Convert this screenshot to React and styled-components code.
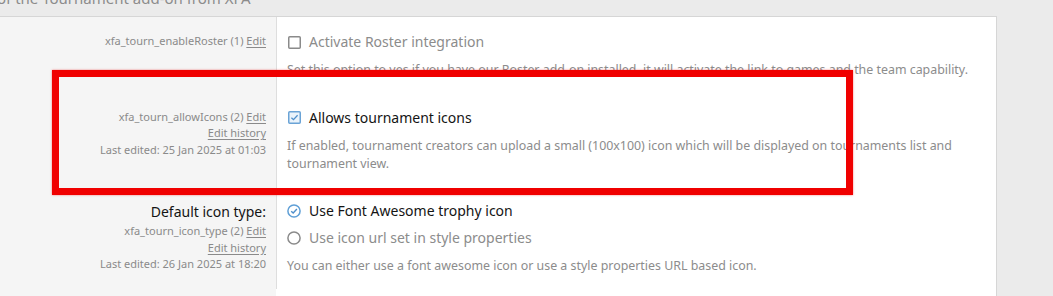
import React from "react";
import styled, { createGlobalStyle } from "styled-components";

const GlobalStyle = createGlobalStyle`
  html, body {
    margin: 0;
    padding: 0;
    background: #ebebeb;
    font-family: "Noto Sans", "Open Sans", sans-serif;
    color: #141414;
    overflow: hidden;
  }
`;

const options = [
  {
    id: "xfa_tourn_enableRoster",
    version: 1,
    history: false,
    choices: [{ type: "checkbox", label: "Activate Roster integration", checked: false }],
    explain:
      "Set this option to yes if you have our Roster add-on installed, it will activate the link to games and the team capability.",
  },
  {
    id: "xfa_tourn_allowIcons",
    version: 2,
    history: true,
    edited: "25 Jan 2025 at 01:03",
    choices: [{ type: "checkbox", label: "Allows tournament icons", checked: true }],
    explain:
      "If enabled, tournament creators can upload a small (100x100) icon which will be displayed on tournaments list and tournament view.",
  },
  {
    id: "xfa_tourn_icon_type",
    title: "Default icon type:",
    version: 2,
    history: true,
    edited: "26 Jan 2025 at 18:20",
    choices: [
      { type: "radio", label: "Use Font Awesome trophy icon", checked: true },
      { type: "radio", label: "Use icon url set in style properties", checked: false },
    ],
    explain: "You can either use a font awesome icon or use a style properties URL based icon.",
  },
];

function CheckBox({ checked }) {
  return (
    <svg width="13" height="13" viewBox="0 0 13 13">
      <rect
        x="0.75"
        y="0.75"
        width="11.5"
        height="11.5"
        rx="1"
        fill={checked ? "#eaf3fb" : "#fff"}
        stroke={checked ? "#6aa3d6" : "#8a8a8a"}
        strokeWidth="1.5"
      />
      {checked && (
        <path d="M3.4 6.7 L5.5 8.7 L9.6 4.3" fill="none" stroke="#4f8fcb" strokeWidth="1.3" />
      )}
    </svg>
  );
}

function Radio({ checked }) {
  return (
    <svg width="14" height="14" viewBox="0 0 14 14">
      <circle
        cx="7"
        cy="7"
        r="6.1"
        fill="#fff"
        stroke={checked ? "#5f9fd6" : "#8a8a8a"}
        strokeWidth="1.5"
      />
      {checked && (
        <path d="M4.2 7.2 L6.2 9.1 L9.9 5.1" fill="none" stroke="#4f8fcb" strokeWidth="1.4" />
      )}
    </svg>
  );
}

export default function App() {
  return (
    <Page>
      <GlobalStyle />
      <Header>
        <span>of the Tournament add-on from XFA</span>
      </Header>
      <Panel>
        {options.map((opt) => (
          <Row key={opt.id}>
            <Dt $titled={!!opt.title}>
              {opt.title && <Title>{opt.title}</Title>}
              <Hint>
                {opt.id} ({opt.version}) <u>Edit</u>
              </Hint>
              {opt.history && (
                <Hint>
                  <u>Edit history</u>
                </Hint>
              )}
              {opt.edited && <Hint>Last edited: {opt.edited}</Hint>}
            </Dt>
            <Dd>
              <Choices>
                {opt.choices.map((c) => (
                  <Choice key={c.label} $checked={c.checked}>
                    <IconBox>
                      {c.type === "radio" ? <Radio checked={c.checked} /> : <CheckBox checked={c.checked} />}
                    </IconBox>
                    {c.label}
                  </Choice>
                ))}
              </Choices>
              <Explain>{opt.explain}</Explain>
            </Dd>
          </Row>
        ))}
        <Highlight />
      </Panel>
    </Page>
  );
}

const Page = styled.div`
  width: 1053px;
  height: 296px;
  overflow: hidden;
`;

const Header = styled.div`
  height: 16px;
  overflow: hidden;
  font-size: 15px;
  color: #8c8c8c;
  span {
    display: block;
    margin-top: -13px;
    margin-left: -3px;
    line-height: 22px;
  }
`;

const Panel = styled.div`
  position: relative;
  width: 998px;
  height: 300px;
  margin-left: -1px;
  box-sizing: border-box;
  border: 1px solid #d6d6d6;
  border-bottom: none;
  background: linear-gradient(to right, #f5f5f5 0, #f5f5f5 276px, #fff 276px);
`;

const Row = styled.div`
  display: grid;
  grid-template-columns: 276px 1fr;
`;

const Dt = styled.div`
  padding: ${(p) => (p.$titled ? "15px" : "16px")} 10px 13px 0;
  text-align: right;
`;

const Title = styled.div`
  font-size: 14px;
  line-height: 22px;
  color: #141414;
`;

const Hint = styled.div`
  font-size: 11px;
  line-height: 16.5px;
  color: #8a8a8a;
  u {
    text-underline-offset: 2px;
  }
`;

const Dd = styled.div`
  border-left: 1px solid #dedede;
  padding: 14px 10px 13.5px 10px;
`;

const Choices = styled.div`
  display: flex;
  flex-direction: column;
  gap: 5px;
`;

const Choice = styled.div`
  display: flex;
  align-items: center;
  gap: 8px;
  font-size: 14px;
  line-height: 22px;
  color: ${(p) => (p.$checked ? "#141414" : "#8c8c8c")};
`;

const IconBox = styled.span`
  display: inline-flex;
  width: 14px;
  justify-content: center;
`;

const Explain = styled.div`
  margin-top: 8px;
  font-size: 12.4px;
  line-height: 18px;
  color: #8c8c8c;
`;

const Highlight = styled.div`
  position: absolute;
  left: 52px;
  top: 53px;
  width: 801px;
  height: 125px;
  box-sizing: border-box;
  border: 7px solid #f00000;
  box-shadow: 0 0 2px rgba(240, 0, 0, 0.5);
  pointer-events: none;
`;
